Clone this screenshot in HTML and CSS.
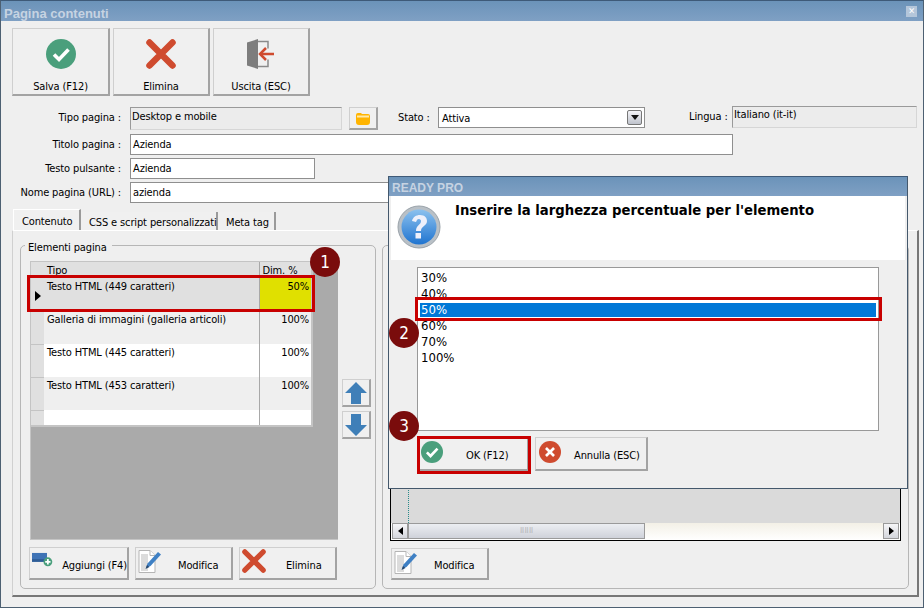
FILE: index.html
```html
<!DOCTYPE html>
<html lang="it">
<head>
<meta charset="utf-8">
<title>Pagina contenuti</title>
<link rel="stylesheet" href="styles.css">
</head>
<body>
<svg class="defs" width="0" height="0" aria-hidden="true">
  <defs>
    <symbol id="i-check" viewBox="0 0 30 30"><circle cx="15" cy="15" r="15" fill="#4a9f7c"/><path d="M8 15.500l5 5 9.500-10" fill="none" stroke="#fff" stroke-width="3.600"/></symbol>
    <symbol id="i-x" viewBox="0 0 30 30"><path d="M3.500 3.500l23 23M26.500 3.500l-23 23" stroke="#cf4b2f" stroke-width="6.500" stroke-linecap="round" fill="none"/></symbol>
    <symbol id="i-edit" viewBox="0 0 24 24"><path d="M1 1.500h11l5 5v17H1z" fill="#fff" stroke="#b5b5b5"/><rect x="3" y="5" width="7" height="17" fill="#dcdcdc"/><path d="M12 1.500v5h5" fill="#fff" stroke="#b5b5b5"/><path d="M8 19l1.500-4.500L20 3l3 2.500L12.500 17z" fill="#3f80c4"/><path d="M7.500 20l1.500-4 2.500 2z" fill="#26486e"/></symbol>
  </defs>
</svg>
<div class="window">
  <div class="titlebar">
    <span class="title-text">Pagina contenuti</span>
    <span class="close">✕</span>
  </div>
  <div class="toolbar">
    <button class="btn big b-first"><svg class="ico30"><use href="#i-check"/></svg><span>Salva (F12)</span></button>
    <button class="btn big"><svg class="ico30"><use href="#i-x"/></svg><span>Elimina</span></button>
    <button class="btn big">
      <svg class="ico30" viewBox="0 0 30 30"><path d="M1 3.500L12 0v30L1 26.500z" fill="#7d7d7d"/><path d="M12 2.500h10v7M12 27.500h10v-7" fill="none" stroke="#8a8a8a" stroke-width="1.500"/><path d="M14 15h14" stroke="#cf4b2f" stroke-width="2.500"/><path d="M20 9l-6 6 6 6" fill="none" stroke="#cf4b2f" stroke-width="2.500"/></svg>
      <span>Uscita (ESC)</span>
    </button>
  </div>
  <div class="form">
    <div class="row row-1">
      <label class="lbl">Tipo pagina :</label>
      <div class="field readonly w-tipo">Desktop e mobile</div>
      <button class="btn folder">
        <svg width="14" height="13" viewBox="0 0 14 13"><path d="M0 3a2 2 0 0 1 2-2h3l1 1h6a2 2 0 0 1 2 2v6a3 3 0 0 1-3 3H3a3 3 0 0 1-3-3z" fill="#ffb400"/><path d="M1 3.500h12v2H1z" fill="#ffe9a8"/></svg>
      </button>
      <label class="lbl-stato">Stato :</label>
      <div class="field select">Attiva<span class="drop"><i></i></span></div>
      <label class="lbl-lingua">Lingua :</label>
      <div class="field readonly w-lingua">Italiano (it-it)</div>
    </div>
    <div class="row row-2"><label class="lbl">Titolo pagina :</label><div class="field w-long">Azienda</div></div>
    <div class="row row-2"><label class="lbl">Testo pulsante :</label><div class="field w-short">Azienda</div></div>
    <div class="row row-2"><label class="lbl">Nome pagina (URL) :</label><div class="field w-long">azienda</div></div>
  </div>
  <div class="tabs">
    <span class="tab active">Contenuto</span>
    <span class="tab t-css">CSS e script personalizzati</span>
    <span class="tab t-meta">Meta tag</span>
  </div>
  <div class="panel">
    <section class="group g-left">
      <span class="legend">Elementi pagina</span>
      <div class="grid-row">
        <div class="grid-area">
          <table class="grid">
            <colgroup><col class="c-h"><col class="c-t"><col class="c-d"></colgroup>
            <tr class="head"><th></th><th class="t">Tipo</th><th class="t">Dim. %</th></tr>
            <tr class="alt sel"><th><i class="caret"></i></th><td>Testo HTML (449 caratteri)</td><td class="num yellow">50%</td></tr>
            <tr class="alt"><th></th><td>Galleria di immagini (galleria articoli)</td><td class="num">100%</td></tr>
            <tr><th></th><td>Testo HTML (445 caratteri)</td><td class="num">100%</td></tr>
            <tr class="alt"><th></th><td>Testo HTML (453 caratteri)</td><td class="num">100%</td></tr>
            <tr class="last"><th></th><td></td><td></td></tr>
          </table>
        </div>
        <div class="arrows">
          <button class="btn arrow"><svg width="24" height="22" viewBox="0 0 24 22"><path d="M12 0l11 11h-6v11H7V11H1z" fill="#3f7fb8"/></svg></button>
          <button class="btn arrow"><svg width="24" height="22" viewBox="0 0 24 22"><path d="M12 22L1 11h6V0h10v11h6z" fill="#3f7fb8"/></svg></button>
        </div>
      </div>
      <div class="actions">
        <button class="btn small b-add">
          <svg class="ico-add" viewBox="0 0 24 18"><rect x="0" y="1" width="17" height="10" fill="#3f73b5"/><rect x="0" y="8" width="17" height="3" fill="#2f5d96"/><circle cx="18" cy="11" r="5" fill="#4a9f7c"/><path d="M15 11h6M18 8v6" stroke="#fff" stroke-width="2"/></svg>
          <span>Aggiungi (F4)</span>
        </button>
        <button class="btn small b-mod"><svg class="ico24"><use href="#i-edit"/></svg><span>Modifica</span></button>
        <button class="btn small b-del"><svg class="ico24"><use href="#i-x"/></svg><span>Elimina</span></button>
      </div>
    </section>
    <section class="group g-right">
      <div class="grid2">
        <div class="dotted"></div>
        <div class="hscroll">
          <span class="sb-btn"><i class="tri-l"></i></span>
          <span class="thumb"><span class="grip">⠿⠿⠿</span></span>
          <span class="track"></span>
          <span class="sb-btn"><i class="tri-r"></i></span>
        </div>
      </div>
      <div class="actions">
        <button class="btn small b-mod"><svg class="ico24"><use href="#i-edit"/></svg><span>Modifica</span></button>
      </div>
    </section>
  </div>

  <div class="dialog">
    <div class="dlg-title">READY PRO</div>
    <div class="dlg-head">
      <svg class="help" viewBox="0 0 44 44">
        <defs><linearGradient id="hg" x1="0" y1="0" x2="0" y2="1"><stop offset="0" stop-color="#8cc1ee"/><stop offset="1" stop-color="#1f74d0"/></linearGradient></defs>
        <circle cx="22" cy="22" r="21" fill="#b9c0c6" stroke="#9aa3aa"/>
        <circle cx="22" cy="22" r="17.500" fill="url(#hg)"/>
        <path d="M15 16c1-4 4-6 8-6 5 0 7 3 7 6 0 5-6 5-6 10h-5c0-6 5-6 5-10 0-1-1-2-2-2-2 0-2 1-3 3z" fill="#eef0fb"/>
        <rect x="18.500" y="28" width="5.500" height="5.500" fill="#eef0fb"/>
      </svg>
      <h1 class="dlg-msg">Inserire la larghezza percentuale per l'elemento</h1>
    </div>
    <ul class="list">
      <li>30%</li><li>40%</li><li class="selected">50%</li><li>60%</li><li>70%</li><li>100%</li>
    </ul>
    <div class="dlg-actions">
      <button class="btn small b-ok"><svg class="ico22"><use href="#i-check"/></svg><span>OK (F12)</span></button>
      <button class="btn small b-cancel">
        <svg class="ico22" viewBox="0 0 30 30"><circle cx="15" cy="15" r="15" fill="#cf4b2f"/><path d="M9.500 9.500l11 11M20.500 9.500l-11 11" stroke="#fff" stroke-width="3.600"/></svg>
        <span>Annulla (ESC)</span>
      </button>
    </div>
  </div>

  <div class="mark m-row"></div>
  <div class="mark m-list"></div>
  <div class="mark m-ok"></div>
  <div class="step s1">1</div>
  <div class="step s2">2</div>
  <div class="step s3">3</div>
</div>
</body>
</html>
```

FILE: styles.css
```css
* { box-sizing: border-box; }
html, body { margin: 0; padding: 0; }
body { width: 924px; height: 608px; overflow: hidden; background: #efefef; font-family: "DejaVu Sans Condensed", "DejaVu Sans", sans-serif; font-size: 11px; letter-spacing: -0.13px; color: #000; white-space: nowrap; }
.defs { position: absolute; }
.window { position: relative; width: 924px; height: 608px; background: #efefef; border: 1px solid #4d6072; border-top-color: #3e5a78; }

.titlebar { height: 20px; display: flex; align-items: center; justify-content: space-between; padding: 4px 6px 0 3px; background: linear-gradient(#6b93b9, #7fa0c4); }
.title-text { font-family: "Liberation Sans", sans-serif; font-weight: 700; font-size: 13px; letter-spacing: 0; color: #c6d3e2; }
.close { width: 11px; height: 11px; margin-top: -3px; background: #b4c6da; color: #fff; font-size: 9px; font-weight: 700; line-height: 11px; text-align: center; }

.btn { display: flex; margin: 0; padding: 0; background: #f0f0f0; border: 1px solid #cfcfcf; border-right: 2px solid #a3a3a3; border-bottom: 2px solid #a3a3a3; font: inherit; letter-spacing: inherit; color: #000; white-space: nowrap; }

.toolbar { display: flex; gap: 3px; padding: 7px 0 0 11px; }
.big { width: 97px; height: 68px; flex-direction: column; align-items: center; padding-top: 10px; }
.b-first { width: 98px; }
.big span { margin-top: 11px; }
.ico30 { width: 30px; height: 30px; }

.form { padding: 11px 0 0 0; }
.row { display: flex; align-items: flex-start; margin-bottom: 3px; }
.row-1 { height: 24px; }
.row-2 { height: 21px; }
.lbl { width: 120px; text-align: right; padding-top: 4px; flex: none; }
.lbl-stato { margin-left: 20px; width: 40px; padding-top: 4px; }
.lbl-lingua { margin-left: 44px; width: 43px; padding-top: 3px; }
.field { border: 1px solid #8f8f8f; background: #fff; height: 21px; line-height: 20px; padding-left: 2px; margin-left: 9px; flex: none; }
.readonly { background: #ececec; border-color: #9a9a9a #d6d6d6 #d6d6d6 #9a9a9a; padding-left: 1px; line-height: 17px; height: 23px; }
.w-tipo { width: 212px; }
.folder { width: 29px; height: 23px; margin-left: 7px; align-items: center; justify-content: center; }
.select { width: 207px; margin-left: 0; position: relative; padding-left: 3px; line-height: 21px; }
.drop { position: absolute; right: 2px; top: 2px; width: 15px; height: 15px; border: 1px solid #777; border-radius: 2px; background: linear-gradient(#f4f4f8, #bfc3cc); display: flex; align-items: center; justify-content: center; }
.drop i { border: 4px solid transparent; border-top: 5px solid #111; border-bottom: 0; }
.w-lingua { width: 185px; margin-left: 0; margin-top: -1px; height: 22px; line-height: 16px; }
.w-long { width: 603px; }
.w-short { width: 185px; }

.tabs { display: flex; align-items: flex-end; height: 21px; margin: 6px 0 0 12px; }
.tab { height: 18px; padding: 0 0 0 8px; border-right: 2px solid #9a9a9a; background: #f0f0f0; line-height: 21px; }
.tab.active { height: 21px; width: 68px; border-left: 1px solid #fff; border-top: 1px solid #fff; padding: 0 0 0 8px; line-height: 23px; }
.t-css { width: 137px; }
.t-meta { width: 58px; }

.panel { width: 907px; height: 367px; margin-left: 11px; display: flex; gap: 6px; padding: 14px 8px 6px 7px; border: 1px solid #fff; border-left-color: #d0d0d0; border-right: 2px solid #777; border-bottom: 2px solid #777; }
.group { position: relative; border: 1px solid #b6b6b6; border-radius: 5px; height: 344px; flex: none; }
.legend { position: absolute; left: 4px; top: -5px; padding: 0 5px 0 3px; background: #efefef; line-height: 14px; }
.g-left { width: 356px; padding: 15px 0 0 8px; }
.g-right { width: 527px; padding: 16px 0 0 7px; }

.grid-row { display: flex; gap: 4px; margin-left: 1px; height: 279px; }
.grid-area { width: 308px; height: 279px; background: #aaa; border: 1px solid #c4c4c4; border-right: 0; }
.grid { border-collapse: collapse; table-layout: fixed; width: 281px; border-right: 2px solid #c4c4c4; border-bottom: 2px solid #c4c4c4; background: #fff; }
.c-h { width: 13px; }
.c-t { width: 215px; }
.c-d { width: 53px; }
.grid tr { height: 33px; }
.grid th { background: #e0e0e0; padding: 0; border-bottom: 1px solid #c4c4c4; position: relative; font-weight: 400; }
.grid td { padding: 1px 2px 0 3px; vertical-align: top; line-height: 15px; border-right: 1px solid #a8a8a8; }
.grid td:last-child { border-right: 0; }
.grid .head { height: 16px; }
.grid .head th { border-bottom: 0; }
.grid .head th.t { text-align: left; padding: 1px 3px 0; line-height: 15px; border-right: 1px solid #a8a8a8; }
.grid .head th.t:last-child { border-right: 0; }
.grid .alt td { background: #efefef; }
.grid .sel td { background: #e0e0e0; }
.grid .sel td.yellow { background: #e0e000; }
.grid .last { height: 16px; }
.grid .num { text-align: right; }
.caret { position: absolute; left: 4px; top: 13px; border: 5px solid transparent; border-left: 6px solid #000; border-right: 0; }

.arrows { display: flex; flex-direction: column; gap: 4px; padding-top: 118px; }
.arrow { width: 29px; height: 28px; align-items: center; justify-content: center; }

.actions { display: flex; gap: 6px; margin-top: 7px; }
.small { height: 33px; align-items: center; }
.small span { padding-top: 4px; }
.b-add { width: 100px; padding-left: 2px; }
.b-add span { margin-left: 9px; }
.ico-add { width: 24px; height: 18px; margin-top: -6px; }
.ico24 { width: 24px; height: 24px; margin-top: -4px; flex: none; }
.b-mod { width: 98px; padding-left: 2px; }
.b-mod span { margin-left: 16px; }
.b-del { width: 98px; padding-left: 2px; }
.b-del span { margin-left: 20px; }

.grid2 { position: relative; width: 511px; height: 279px; background: #dadada; border: 1px solid #000; display: flex; flex-direction: column; justify-content: flex-end; }
.dotted { position: absolute; left: 17px; top: 0; bottom: 17px; border-left: 1px dotted #2a8a8a; }
.hscroll { display: flex; height: 17px; background: #fff; padding: 0 1px; }
.sb-btn { width: 16px; height: 16px; flex: none; border: 1px solid #9a9a9a; background: linear-gradient(#f6f6f8, #d4d6dc); display: flex; align-items: center; justify-content: center; }
.tri-l { border: 4px solid transparent; border-right: 5px solid #000; border-left: 0; }
.tri-r { border: 4px solid transparent; border-left: 5px solid #000; border-right: 0; }
.thumb { width: 237px; height: 16px; flex: none; border: 1px solid #9a9a9a; background: linear-gradient(#eceef2, #cfd2da); display: flex; align-items: center; justify-content: center; }
.grip { font-size: 7px; color: #999; line-height: 1; }
.track { flex: 1; background: linear-gradient(#f3f0e6, #fff); }
.g-right .actions { margin-left: 1px; }
.g-right .small { height: 32px; }

.dialog { position: absolute; left: 387px; top: 175px; width: 520px; height: 313px; background: #efefef; border: 1px solid #44586c; border-top-color: #3e5a78; }
.dlg-title { height: 19px; padding-left: 3px; background: linear-gradient(#6b93b9, #7fa0c4); color: #c6d3e2; font-family: "Liberation Sans", sans-serif; font-weight: 700; font-size: 12px; letter-spacing: 0; line-height: 22px; }
.dlg-head { display: flex; width: 514px; height: 64px; margin-left: 2px; background: #fff; padding: 9px 0 0 6px; }
.help { width: 44px; height: 44px; flex: none; }
.dlg-msg { margin: -5px 0 0 14px; font-size: 14.700px; font-weight: 700; font-family: "DejaVu Sans Condensed", "DejaVu Sans", sans-serif; letter-spacing: 0; line-height: 20px; color: #000; }
.list { list-style: none; margin: 7px 0 0 28px; padding: 2px 1px 0; width: 462px; height: 164px; border: 1px solid #999; background: #fff; font-size: 13px; letter-spacing: 0; }
.list li { height: 16px; line-height: 16px; padding-left: 2px; }
.list .selected { background: #0078d7; color: #fff; outline: 1px solid #fff; outline-offset: -1px; }
.dlg-actions { display: flex; gap: 6px; margin: 6px 0 0 29px; }
.b-ok { width: 111px; height: 34px; padding-left: 2px; }
.b-ok span { margin-left: 23px; }
.b-cancel { width: 113px; height: 34px; padding-left: 3px; }
.b-cancel span { margin-left: 13px; }
.ico22 { width: 22px; height: 22px; flex: none; margin-top: -4px; }

.mark { position: absolute; border: 3px solid #c80000; }
.m-row { left: 26px; top: 274px; width: 288px; height: 37px; }
.m-list { left: 414px; top: 296px; width: 467px; height: 24px; }
.m-ok { left: 416px; top: 435px; width: 114px; height: 38px; }
.step { position: absolute; width: 30px; height: 30px; border-radius: 50%; background: #7a0c0c; color: #fff; font-size: 17px; line-height: 30px; text-align: center; letter-spacing: 0; }
.s1 { left: 309px; top: 246px; }
.s2 { left: 388px; top: 317px; }
.s3 { left: 388px; top: 410px; }
```
